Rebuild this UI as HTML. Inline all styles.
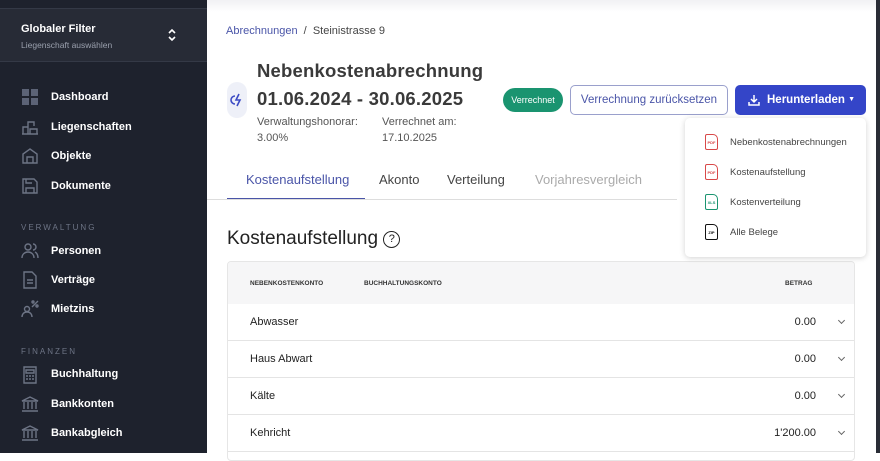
<!DOCTYPE html>
<html><head><meta charset="utf-8"><style>
*{margin:0;padding:0;box-sizing:border-box}
body{width:880px;height:453px;overflow:hidden;font-family:"Liberation Sans",sans-serif;background:#fff;position:relative}
.sb{position:absolute;left:0;top:0;width:207px;height:453px;background:#1e222d;color:#fff}
.gf{position:absolute;left:0;top:8px;width:207px;height:54px;background:#272b36;border-top:1px solid #343946;border-bottom:1px solid #343946}
.gf b{position:absolute;left:21px;top:14px;font-size:11px}
.gf span{position:absolute;left:21px;top:31px;font-size:8.5px;color:#9aa0ad}
.it{position:absolute;left:51px;font-size:11px;font-weight:bold}
.sb svg{position:absolute;left:21px;width:18px;height:18px;fill:none;stroke:#6d7485;stroke-width:1.4}
.sec{position:absolute;left:21px;font-size:8px;color:#6d7485;letter-spacing:2px}
.main{position:absolute;left:207px;top:0;right:4px;height:453px}
.rb{position:absolute;right:0;top:0;width:4px;height:453px;background:#2a2d36}
.tb{position:absolute;left:0;top:0;right:0;height:12px;background:linear-gradient(#f1f1f4,#fff)}
.abs{position:absolute}
.fi{position:absolute;left:20px;width:13px;height:16px;border:1.5px solid;border-radius:2px 5px 2px 2px;font-size:4px;font-weight:bold;text-align:center;line-height:16px}
.ch{position:absolute;right:10px;top:14px;width:5px;height:5px;border-right:1.2px solid #666;border-bottom:1.2px solid #666;transform:rotate(45deg)}
</style></head><body>
<div class="sb">
<div class="gf"><b>Globaler Filter</b><span>Liegenschaft auswählen</span>
<svg style="left:166px;top:18px;width:12px;height:16px;stroke:#fff;stroke-width:1.6" viewBox="0 0 12 16"><path d="M3 6l3-3 3 3M3 10l3 3 3-3"/></svg></div>
<div class="abs" style="left:22px;top:89px;width:16px;height:16px;display:grid;grid-template-columns:1fr 1fr;gap:2px"><div style="background:#5c6376"></div><div style="background:#5c6376"></div><div style="background:#5c6376"></div><div style="background:#5c6376"></div></div>
<div class="it" style="top:91px">Dashboard</div>
<svg style="top:118px" viewBox="0 0 18 18"><path d="M2 16V9h5v7M7 16V4h6v4M9 16v-5h7v5zM1 16h16"/></svg><div class="it" style="top:121px">Liegenschaften</div>
<svg style="top:147px" viewBox="0 0 18 18"><path d="M2 16V7l7-5 7 5v9zM6 16v-6h6v6"/></svg><div class="it" style="top:150px">Objekte</div>
<svg style="top:177px" viewBox="0 0 18 18"><path d="M2 2h11l3 3v11H2zM5 16v-5h8v5M5 2v4h6"/></svg><div class="it" style="top:180px">Dokumente</div>
<div class="sec" style="top:223px">VERWALTUNG</div>
<svg style="top:242px" viewBox="0 0 18 18"><circle cx="7" cy="5" r="3"/><path d="M1 16c0-4 3-6 6-6s6 2 6 6M12 2a3 3 0 010 6M14 10c2 1 3 3 3 6"/></svg><div class="it" style="top:245px">Personen</div>
<svg style="top:271px" viewBox="0 0 18 18"><path d="M3 1h8l4 4v12H3zM6 9h6M6 12h6"/></svg><div class="it" style="top:274px">Verträge</div>
<svg style="top:300px" viewBox="0 0 18 18"><circle cx="6" cy="9" r="2.5"/><path d="M1 17c0-3 2-5 5-5s5 2 5 5M11 7l6-6"/><circle cx="12" cy="2" r="1"/><circle cx="16" cy="6" r="1"/></svg><div class="it" style="top:303px">Mietzins</div>
<div class="sec" style="top:347px">FINANZEN</div>
<svg style="top:366px" viewBox="0 0 18 18"><path d="M3 1h12v16H3zM5 4h8v3H5zM5 10h2M8 10h2M11 10h2M5 13h2M8 13h2M11 13h2"/></svg><div class="it" style="top:368px">Buchhaltung</div>
<svg style="top:395px" viewBox="0 0 18 18"><path d="M1 6l8-4 8 4zM3 7v7M7 7v7M11 7v7M15 7v7M1 16h16"/></svg><div class="it" style="top:398px">Bankkonten</div>
<svg style="top:424px" viewBox="0 0 18 18"><path d="M1 6l8-4 8 4zM3 7v7M7 7v7M11 7v7M15 7v7M1 16h16"/></svg><div class="it" style="top:427px">Bankabgleich</div>
</div>
<div class="rb"></div>
<div class="main">
<div class="tb"></div>
<div class="abs" style="left:19px;top:25px;font-size:11px;color:#444"><span style="color:#4a55a8">Abrechnungen</span> &nbsp;/&nbsp; Steinistrasse 9</div>
<div class="abs" style="left:20px;top:82px;width:20px;height:36px;background:#eef0f8;border-radius:10px"><svg style="position:absolute;left:3px;top:11px;width:14px;height:14px;fill:none;stroke:#3c4bc4;stroke-width:1.6" viewBox="0 0 14 14"><path d="M5 3a4 4 0 100 8M9 1L6 7h4l-3 6"/></svg></div>
<div class="abs" style="left:50px;top:57px;font-size:18.5px;font-weight:bold;color:#3a3a3a;line-height:28px;letter-spacing:.2px">Nebenkostenabrechnung<br>01.06.2024 - 30.06.2025</div>
<div class="abs" style="left:50px;top:114px;font-size:11px;color:#555;line-height:16px">Verwaltungshonorar:<br>3.00%</div>
<div class="abs" style="left:175px;top:114px;font-size:11px;color:#555;line-height:16px">Verrechnet am:<br>17.10.2025</div>
<div class="abs" style="left:296px;top:88px;width:60px;height:24px;background:#1a9470;border-radius:12px;color:#fff;font-size:9px;text-align:center;line-height:24px">Verrechnet</div>
<div class="abs" style="left:363px;top:85px;width:158px;height:30px;border:1px solid #9aa0cc;border-radius:5px;color:#4a55a8;font-size:11.5px;text-align:center;line-height:28px">Verrechnung zurücksetzen</div>
<div class="abs" style="left:528px;top:85px;width:131px;height:30px;background:#3445c8;border-radius:5px;color:#fff;font-size:11.5px;font-weight:bold;line-height:30px;white-space:nowrap">
<span class="abs" style="left:32px;top:0">Herunterladen</span><span class="abs" style="right:11px;top:0;font-size:7px">▼</span>
<svg style="position:absolute;left:13px;top:9px;width:12px;height:12px;fill:none;stroke:#fff;stroke-width:1.5" viewBox="0 0 12 12"><path d="M6 1v7M3 5l3 3 3-3M1 8v3h10V8"/></svg></div>
<div class="abs" style="left:20px;top:170px;width:138px;border-bottom:1.5px solid #4a55a8;height:29px;"></div>
<div class="abs" style="left:0;top:199px;width:470px;height:1px;background:#ddd"></div>
<div class="abs" style="left:39px;top:172px;font-size:13px;color:#4a55a8">Kostenaufstellung</div>
<div class="abs" style="left:172px;top:172px;font-size:13px;color:#444">Akonto</div>
<div class="abs" style="left:240px;top:172px;font-size:13px;color:#444">Verteilung</div>
<div class="abs" style="left:328px;top:172px;font-size:13px;color:#aaa">Vorjahresvergleich</div>
<div class="abs" style="left:20px;top:228px;font-size:19px;color:#222">Kostenaufstellung <span style="display:inline-block;width:17px;height:17px;border:1.5px solid #222;border-radius:50%;font-size:11px;text-align:center;line-height:15px;vertical-align:2px">?</span></div>
<div class="abs" style="left:20px;top:261px;width:628px;height:200px;border:1px solid #e6e6e6;border-radius:4px;overflow:hidden">
<div style="height:42px;background:#f6f6f7;font-size:6.5px;font-weight:bold;color:#333;position:relative">
<span class="abs" style="left:22px;top:18px">NEBENKOSTENKONTO</span><span class="abs" style="left:136px;top:18px">BUCHHALTUNGSKONTO</span><span class="abs" style="left:557px;top:18px">BETRAG</span></div>
<div style="position:relative;height:37px;border-bottom:1px solid #e4e4e4;font-size:11px;color:#222"><span class="abs" style="left:22px;top:12px">Abwasser</span><span class="abs" style="right:38px;top:12px">0.00</span><i class="ch"></i></div>
<div style="position:relative;height:37px;border-bottom:1px solid #e4e4e4;font-size:11px;color:#222"><span class="abs" style="left:22px;top:12px">Haus Abwart</span><span class="abs" style="right:38px;top:12px">0.00</span><i class="ch"></i></div>
<div style="position:relative;height:37px;border-bottom:1px solid #e4e4e4;font-size:11px;color:#222"><span class="abs" style="left:22px;top:12px">Kälte</span><span class="abs" style="right:38px;top:12px">0.00</span><i class="ch"></i></div>
<div style="position:relative;height:37px;border-bottom:1px solid #e4e4e4;font-size:11px;color:#222"><span class="abs" style="left:22px;top:12px">Kehricht</span><span class="abs" style="right:38px;top:12px">1'200.00</span><i class="ch"></i></div>
</div>
<div class="abs" style="left:478px;top:118px;width:181px;height:139px;background:#fff;border-radius:5px;box-shadow:0 1px 6px rgba(0,0,0,.18);font-size:9.5px;color:#444">
<div class="fi" style="top:16px;color:#d84848;border-color:#d84848">PDF</div><span class="abs" style="left:45px;top:19px">Nebenkostenabrechnungen</span>
<div class="fi" style="top:46px;color:#d84848;border-color:#d84848">PDF</div><span class="abs" style="left:45px;top:49px">Kostenaufstellung</span>
<div class="fi" style="top:76px;color:#1a9470;border-color:#1a9470">XLS</div><span class="abs" style="left:45px;top:79px">Kostenverteilung</span>
<div class="fi" style="top:106px;color:#111;border-color:#111">ZIP</div><span class="abs" style="left:45px;top:109px">Alle Belege</span>
</div>
</div>
</body></html>
